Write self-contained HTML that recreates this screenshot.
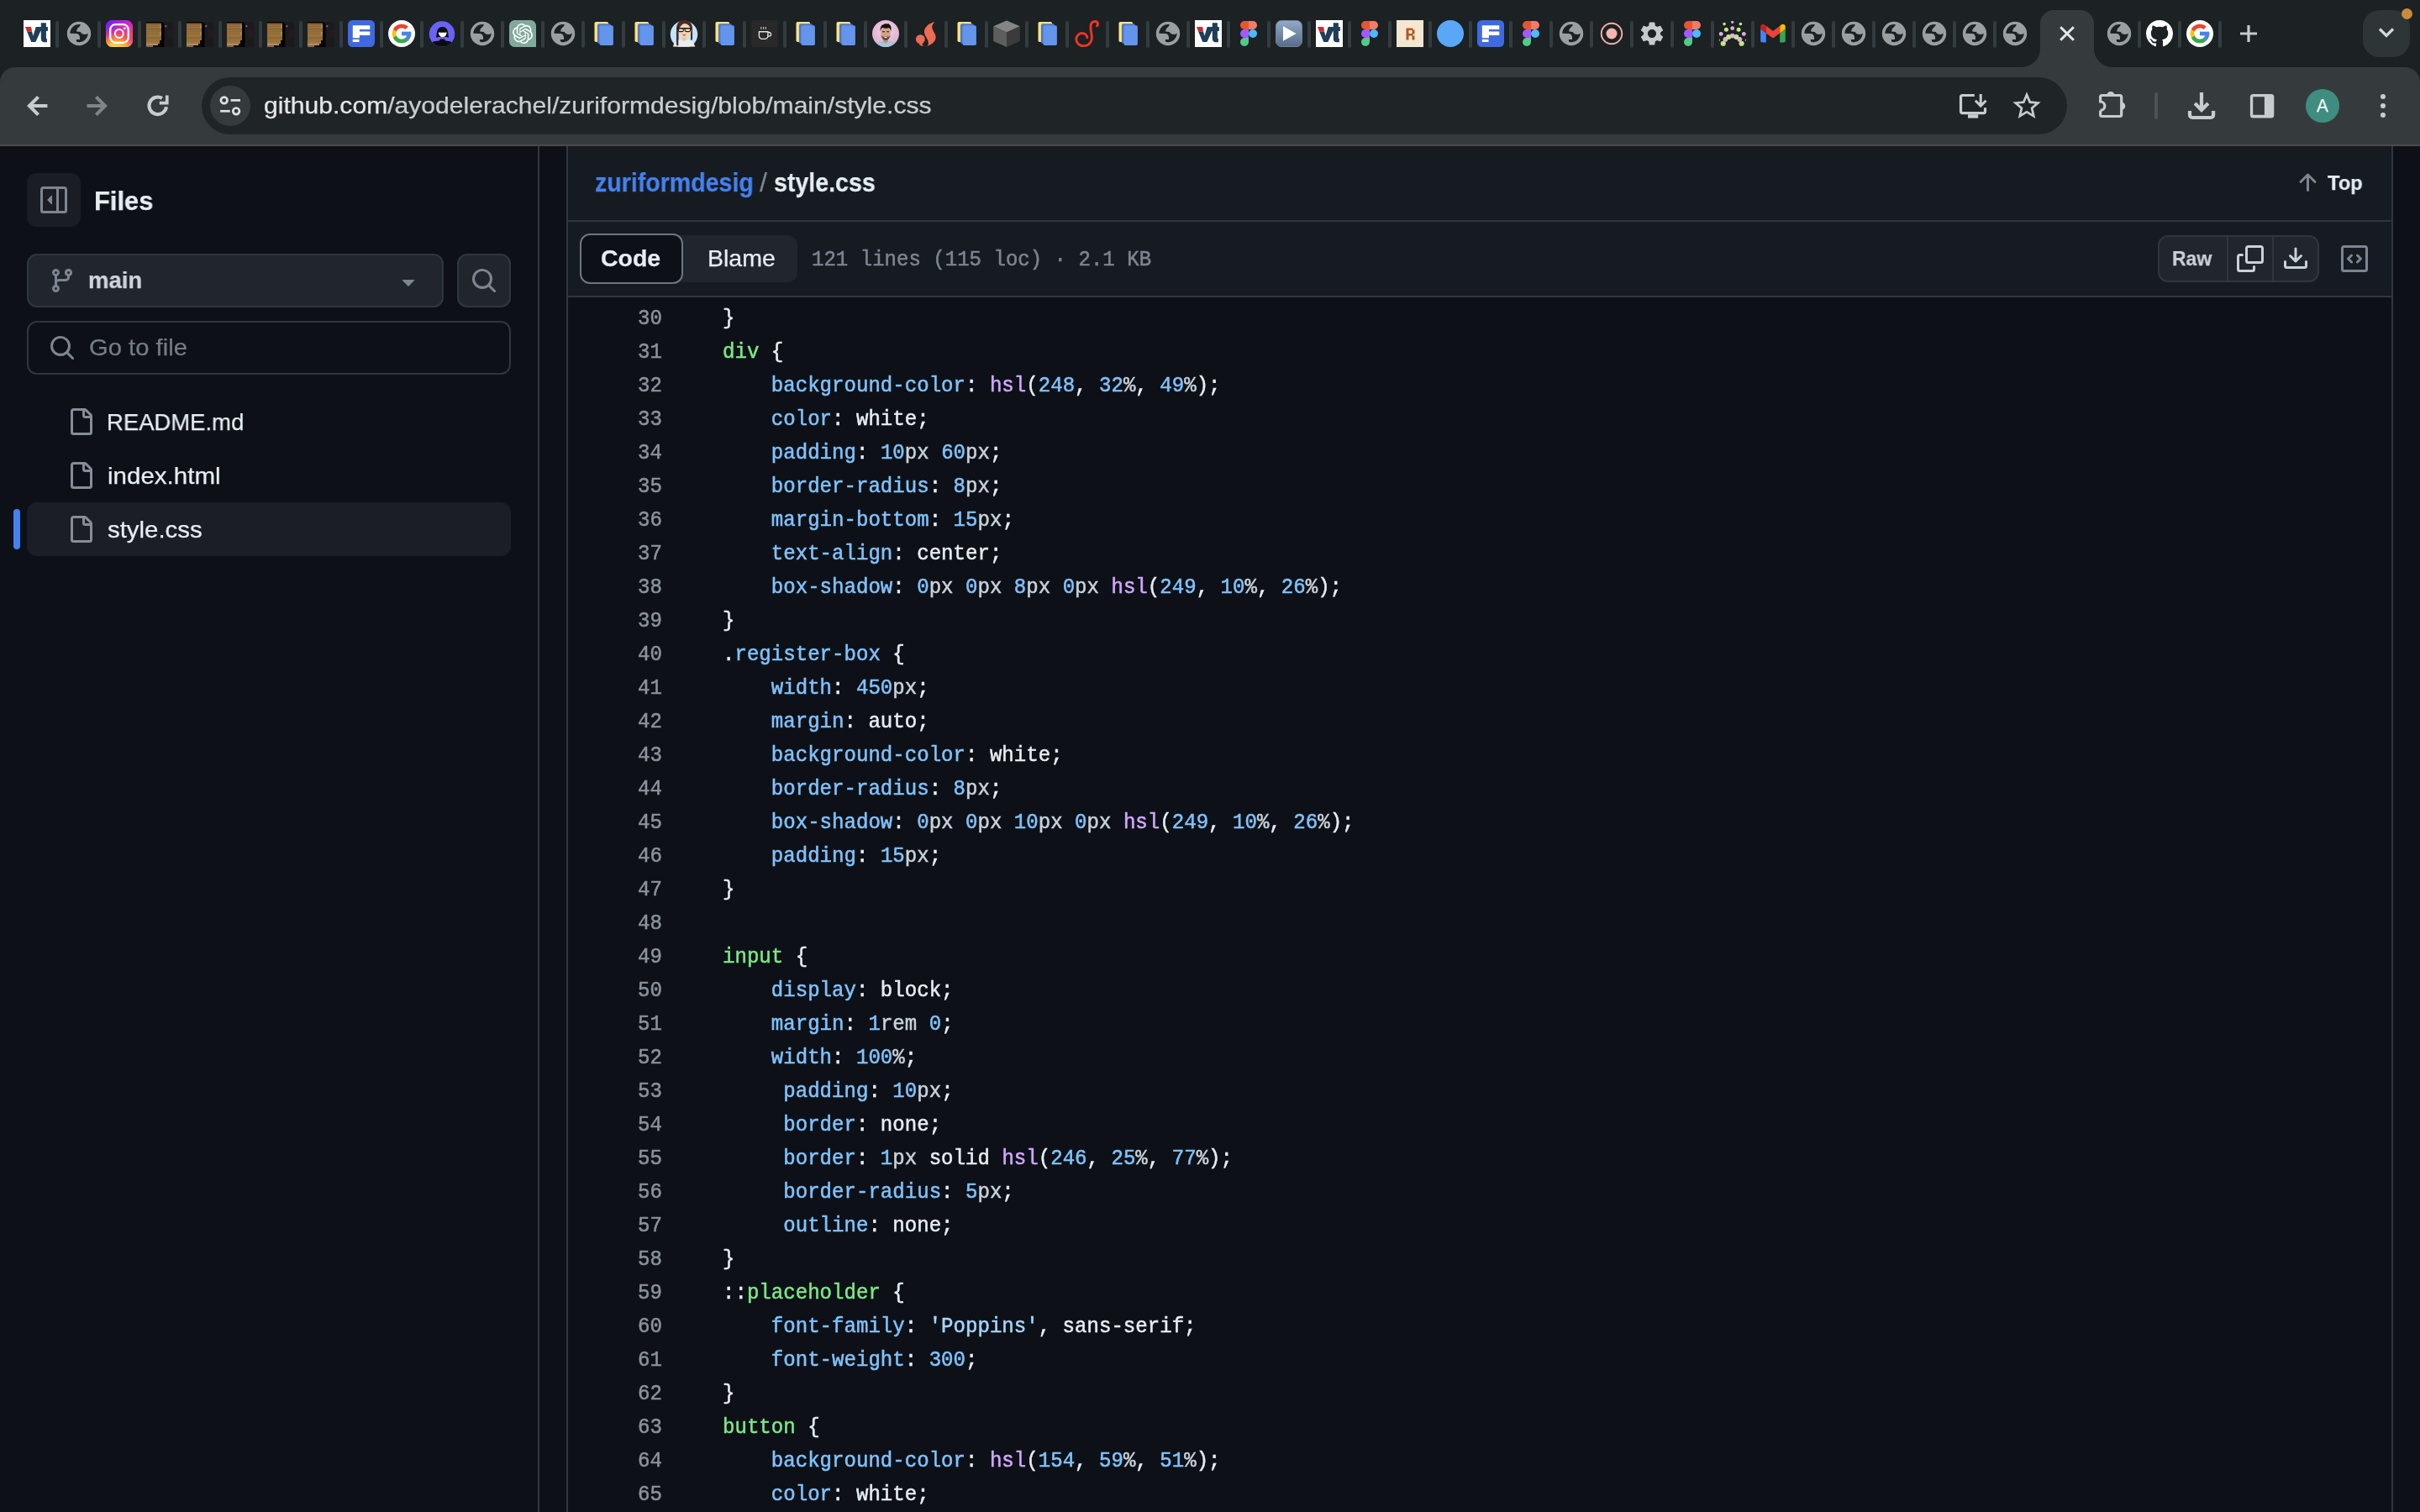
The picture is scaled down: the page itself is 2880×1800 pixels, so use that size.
<!DOCTYPE html>
<html lang="en"><head><meta charset="utf-8">
<title>zuriformdesig/style.css at main</title>
<style>
*{box-sizing:border-box;margin:0;padding:0}
html,body{width:2880px;height:1800px;overflow:hidden;background:#0d1117}
body{position:relative;font-family:"Liberation Sans",sans-serif;color:#e6edf3}
.abs{position:absolute}
svg{display:block;overflow:visible}
/* ---------- chrome ---------- */
#tabstrip{position:absolute;left:0;top:0;width:2880px;height:110px;background:#1c2123}
#toolbar{position:absolute;left:0;top:80px;width:2880px;height:92px;background:#353b3d;border-radius:18px 18px 0 0}
#tbline{position:absolute;left:0;top:172px;width:2880px;height:2px;background:#4a4b4b}
.fav{position:absolute;top:24px;width:32px;height:32px}
.sep{position:absolute;top:25px;width:4px;height:32px;border-radius:2px;background:#333c3f}
#omni{position:absolute;left:240px;top:12px;width:2220px;height:68px;border-radius:34px;background:#1f2527}
#siteinfo{position:absolute;left:10px;top:10px;width:48px;height:48px;border-radius:24px;background:#353b3d}
#url{position:absolute;left:75px;top:0;height:68px;line-height:67px;font-size:28px;color:#e3e6e8;white-space:nowrap;letter-spacing:0.1px}
.tbi{position:absolute}
/* ---------- page ---------- */
#page{position:absolute;left:0;top:174px;width:2880px;height:1626px;background:#0d1117;overflow:hidden}
#sideborder{position:absolute;left:640px;top:0;width:2px;height:1626px;background:#30363d}
#gutterL{position:absolute;left:642px;top:0;width:32px;height:1626px;background:#0d1117}
#gutterR{position:absolute;left:2848px;top:0;width:32px;height:1626px;background:#0d1117}
#main{position:absolute;left:674px;top:0;width:2174px;height:1626px;border-left:2px solid #30363d;border-right:2px solid #30363d;background:#0d1117}
#hdr1{position:absolute;left:0;top:0;width:2170px;height:90px;background:#161b22;border-bottom:2px solid #30363d}
#hdr2{position:absolute;left:0;top:90px;width:2170px;height:90px;background:#161b22;border-bottom:2px solid #30363d}
.t{position:absolute;white-space:nowrap;line-height:1;will-change:transform}
.b{font-weight:bold;-webkit-text-stroke:0}
.t{-webkit-text-stroke:0.25px}
.mono{font-family:"Liberation Mono",monospace;-webkit-text-stroke:0.5px}
.btn{position:absolute;border:2px solid #30363d;background:#21262d;border-radius:12px}
/* code */
#code{position:absolute;left:0;top:0;width:2170px}
.ln{position:absolute;left:0;width:115px;text-align:right;font-family:"Liberation Mono",monospace;font-size:24px;line-height:40px;height:40px;color:#8b929c;white-space:pre;will-change:transform;-webkit-text-stroke:0.5px}
.cl{position:absolute;left:186px;font-family:"Liberation Mono",monospace;font-size:24px;line-height:40px;height:40px;color:#e6edf3;white-space:pre;will-change:transform;-webkit-text-stroke:0.5px}
.u{color:#c9d1d9}.p{color:#80c2fd}.g{color:#7ee787}.f{color:#d2a8ff}.s{color:#a5d6ff}

</style></head>
<body>
<div id="tabstrip">
<svg width="0" height="0" style="position:absolute"><defs>
<symbol id="fBLUEC" viewBox="0 0 32 32" overflow="visible"><circle cx="16" cy="16" r="16" fill="#59a7f6"/></symbol>
<symbol id="fBROWN" viewBox="0 0 32 32" overflow="visible"><rect width="32" height="32" fill="#1f1b1f"/><rect width="32" height="2.100" fill="#1d2324"/><rect x="21.500" y="2.100" width="10.500" height="30" fill="#1d1a1e"/><rect x="26" y="12" width="6" height="8" fill="#231b22"/><rect x="24" y="22" width="8" height="10" fill="#1a1a1c"/><rect x="0" y="2.100" width="19.800" height="1.700" fill="#070304"/><rect x="18" y="3.700" width="3.500" height="28.300" fill="#050203"/><rect x="0" y="3.70" width="18" height="2.08" fill="#8f6f33"/><rect x="0" y="5.73" width="18" height="2.08" fill="#a0723f"/><rect x="16" y="5.73" width="2" height="2.08" fill="#a58a52"/><rect x="0" y="7.76" width="18" height="2.08" fill="#a27440"/><rect x="16" y="7.76" width="2" height="2.08" fill="#a58a52"/><rect x="0" y="9.79" width="18" height="2.08" fill="#8e6f2f"/><rect x="0" y="11.82" width="18" height="2.08" fill="#99704a"/><rect x="0" y="13.85" width="18" height="2.08" fill="#967236"/><rect x="16" y="13.85" width="2" height="2.08" fill="#a58a52"/><rect x="0" y="15.88" width="18" height="2.08" fill="#9c7038"/><rect x="16" y="15.88" width="2" height="2.08" fill="#a58a52"/><rect x="0" y="17.91" width="18" height="2.08" fill="#997540"/><rect x="0" y="19.94" width="18" height="2.08" fill="#8c6a30"/><rect x="0" y="21.97" width="18" height="2.08" fill="#93713c"/><rect x="0" y="24.00" width="16.1" height="2.08" fill="#a0703a"/><rect x="16.1" y="24.00" width="1.9" height="2.08" fill="#0a0604"/><rect x="0" y="26.03" width="16.1" height="2.08" fill="#a07a48"/><rect x="16.1" y="26.03" width="1.9" height="2.08" fill="#0a0604"/><rect x="0" y="28.06" width="14" height="2.08" fill="#b09070"/><rect x="14" y="28.06" width="4.0" height="2.08" fill="#0a0604"/><rect x="0" y="30.09" width="8.2" height="1.96" fill="#8a6a40"/><rect x="8.2" y="30.09" width="9.8" height="1.96" fill="#0a0604"/><rect x="22.300" y="6" width="2" height="2.200" fill="#69657f"/></symbol>
<symbol id="fCHATGPT" viewBox="0 0 32 32" overflow="visible"><path fill="#80a99c" d="M6.500 0H25.500A6.500 6.500 0 0 1 32 6.500V32H6.500A6.500 6.500 0 0 1 0 25.500V6.500A6.500 6.500 0 0 1 6.500 0Z"/><path transform="translate(4 4)" fill="#fff" d="M22.2819 9.8211a5.9847 5.9847 0 0 0-.5157-4.9108 6.0462 6.0462 0 0 0-6.5098-2.9A6.0651 6.0651 0 0 0 4.9807 4.1818a5.9847 5.9847 0 0 0-3.9977 2.9 6.0462 6.0462 0 0 0 .7427 7.0966 5.98 5.98 0 0 0 .511 4.9107 6.051 6.051 0 0 0 6.5146 2.9001A5.9847 5.9847 0 0 0 13.2599 24a6.0557 6.0557 0 0 0 5.7718-4.2058 5.9894 5.9894 0 0 0 3.9977-2.9001 6.0557 6.0557 0 0 0-.7475-7.0729zm-9.022 12.6081a4.4755 4.4755 0 0 1-2.8764-1.0408l.1419-.0804 4.7783-2.7582a.7948.7948 0 0 0 .3927-.6813v-6.7369l2.02 1.1686a.071.071 0 0 1 .038.052v5.5826a4.504 4.504 0 0 1-4.4945 4.4944zm-9.6607-4.1254a4.4708 4.4708 0 0 1-.5346-3.0137l.142.0852 4.783 2.7582a.7712.7712 0 0 0 .7806 0l5.8428-3.3685v2.3324a.0804.0804 0 0 1-.0332.0615L9.74 19.9502a4.4992 4.4992 0 0 1-6.1408-1.6464zM2.3408 7.8956a4.485 4.485 0 0 1 2.3655-1.9728V11.6a.7664.7664 0 0 0 .3879.6765l5.8144 3.3543-2.0201 1.1685a.0757.0757 0 0 1-.071 0l-4.8303-2.7865A4.504 4.504 0 0 1 2.3408 7.872zm16.5963 3.8558L13.1038 8.364 15.1192 7.2a.0757.0757 0 0 1 .071 0l4.8303 2.7913a4.4944 4.4944 0 0 1-.6765 8.1042v-5.6772a.79.79 0 0 0-.407-.667zm2.0107-3.0231l-.142-.0852-4.7735-2.7818a.7759.7759 0 0 0-.7854 0L9.409 9.2297V6.8974a.0662.0662 0 0 1 .0284-.0615l4.8303-2.7866a4.4992 4.4992 0 0 1 6.6802 4.66zM8.3065 12.863l-2.02-1.1638a.0804.0804 0 0 1-.038-.0567V6.0742a4.4992 4.4992 0 0 1 7.3757-3.4537l-.142.0805L8.704 5.459a.7948.7948 0 0 0-.3927.6813zm1.0976-2.3654l2.602-1.4998 2.6069 1.4998v2.9994l-2.5974 1.4997-2.6067-1.4997Z"/></symbol>
<symbol id="fCOFFEE" viewBox="0 0 32 32" overflow="visible"><rect width="32" height="32" rx="3.500" fill="#2a2929"/><g fill="none" stroke="#e4e4e4" stroke-width="1.350" stroke-linejoin="round"><path d="M9.400 13.700h10.500v5a3.700 3.700 0 0 1-3.700 3.700h-3.100a3.700 3.700 0 0 1-3.700-3.700z"/><path d="M19.900 14.500h1.400a2.300 2.300 0 0 1 0 4.600h-1.600"/></g><path stroke="#cfcfcf" stroke-width="1.100" d="M11.800 7.900v2.900M14.600 7.900v2.900M17.300 7.900v2.900"/></symbol>
<symbol id="fCUBE" viewBox="0 0 32 32" overflow="visible"><path fill="#858585" d="M16 0.500 31.800 7.300 16 14.500 0.200 7.300Z"/><path fill="#5e5e5e" d="M0.200 7.300 16 14.500V32L0.200 25Z"/><path fill="#3b3b3b" d="M31.800 7.300 16 14.500V32L31.800 25Z"/></symbol>
<symbol id="fDOCS" viewBox="0 0 32 32" overflow="visible"><rect x="5.500" y="1.900" width="16.600" height="24.100" rx="1.800" fill="#fbe47c"/><rect x="8.900" y="4.200" width="16" height="23.600" rx="1.800" fill="#5474c4"/><rect x="11.500" y="6.200" width="16.400" height="23.800" rx="1.800" fill="#6495ec"/></symbol>
<symbol id="fDOTS" viewBox="0 0 32 32" overflow="visible"><circle cx="4.77" cy="27.75" r="3.1" fill="#c3e681"/><circle cx="26.6" cy="27.75" r="3.1" fill="#c3e681"/><circle cx="7.4" cy="22.8" r="2.9" fill="#dcb3db"/><circle cx="24.3" cy="22.8" r="2.9" fill="#dcb3db"/><circle cx="11.2" cy="19.9" r="3.0" fill="#c3e681"/><circle cx="20.3" cy="19.9" r="3.0" fill="#c3e681"/><circle cx="15.7" cy="18.6" r="2.8" fill="#dcb3db"/><circle cx="2.15" cy="16.4" r="2.4" fill="#dcb3db"/><circle cx="8.4" cy="11.3" r="2.5" fill="#c3e681"/><circle cx="15.7" cy="9.6" r="2.4" fill="#dcb3db"/><circle cx="23.1" cy="11.3" r="2.5" fill="#c3e681"/><circle cx="29.35" cy="16.4" r="2.4" fill="#dcb3db"/><circle cx="6.07" cy="4.6" r="1.8" fill="#c3e681"/><circle cx="15.7" cy="2.3" r="1.6" fill="#dcb3db"/><circle cx="25.4" cy="4.6" r="1.8" fill="#c3e681"/><ellipse cx="0.400" cy="23.700" rx="0.600" ry="1.500" fill="#8fa862"/><ellipse cx="31.500" cy="23.700" rx="0.600" ry="1.500" fill="#8fa862"/></symbol>
<symbol id="fFBLUE" viewBox="0 0 32 32" overflow="visible"><rect width="32" height="32" rx="5.500" fill="#3f69e1"/><path fill="#fff" d="M5.800 6.300H26.300V10.900H13.900V13.600H26.300V18.100H13.900V21.200H5.800Z"/><rect x="5.800" y="22.900" width="7.700" height="3.100" fill="#fff"/></symbol>
<symbol id="fFIGMA" viewBox="0 0 32 32" overflow="visible"><path fill="#e4572e" d="M11 1h5v10h-5a5 5 0 0 1 0-10z"/><path fill="#f07b6a" d="M16 1h5a5 5 0 0 1 0 10h-5z"/><path fill="#a259ff" d="M11 11h5v10h-5a5 5 0 0 1 0-10z"/><circle cx="21" cy="16" r="5" fill="#4cb9f8"/><path fill="#54c988" d="M11 21h5v5a5 5 0 1 1-5-5z"/></symbol>
<symbol id="fFLAME" viewBox="0 0 32 32" overflow="visible"><path fill="#ed6d54" d="M26.800 2C22 2.800 17.500 5.500 15 9.500 13.200 12.800 13.800 16.500 16.200 20.200 17.600 22.500 19 25 18.900 27.500 18.850 28.900 18.200 30 17.350 30.660 20 30.300 24 27.800 26.300 24.800 28.200 21.800 28 18.500 26.200 15.400 24.600 12.700 23.100 10.500 23.200 8 23.300 5.800 24.800 3.600 26.800 2Z"/><circle cx="9.350" cy="22.660" r="5.400" fill="#ed6d54"/><path fill="#ed6d54" d="M13.700 25.900C12.600 27 11.600 27.800 11.400 28.400 11.800 29.500 12.600 30.300 13.300 30.950 11.500 31 9.500 30.600 7.500 28.500Z"/></symbol>
<symbol id="fGEAR" viewBox="0 0 32 32" overflow="visible"><g transform="translate(-0.800 -0.800) scale(1.400)"><path fill="#c6cacc" d="M19.140 12.940c.04-.3.060-.610.060-.940 0-.320-.020-.640-.070-.940l2.030-1.580a.490.490 0 0 0 .120-.610l-1.920-3.320a.488.488 0 0 0-.590-.220l-2.390.960c-.5-.380-1.030-.7-1.620-.940l-.360-2.540a.484.484 0 0 0-.480-.410h-3.840c-.240 0-.430.170-.470.410l-.360 2.540c-.590.240-1.130.570-1.620.940l-2.390-.960c-.220-.080-.470 0-.590.220L2.740 8.870c-.120.210-.080.470.120.610l2.030 1.580c-.050.3-.090.630-.090.940s.020.640.070.940l-2.030 1.580a.490.490 0 0 0-.120.610l1.920 3.320c.120.220.370.290.590.220l2.390-.960c.5.380 1.030.7 1.620.940l.360 2.540c.050.240.240.410.480.410h3.840c.240 0 .440-.170.470-.410l.360-2.540c.590-.240 1.130-.560 1.620-.940l2.390.960c.220.080.470 0 .590-.220l1.920-3.320c.120-.220.070-.470-.120-.610l-2.010-1.580zM12 15.600c-1.980 0-3.600-1.620-3.600-3.600s1.620-3.600 3.600-3.600 3.600 1.620 3.600 3.600-1.620 3.600-3.600 3.600z"/></g></symbol>
<symbol id="fGITHUB" viewBox="0 0 32 32" overflow="visible"><g transform="scale(2)"><path fill="#fff" d="M8 0c4.420 0 8 3.580 8 8a8.013 8.013 0 0 1-5.450 7.590c-.4.080-.550-.170-.550-.380 0-.270.010-1.130.010-2.200 0-.750-.250-1.230-.540-1.480 1.780-.2 3.650-.880 3.650-3.950 0-.880-.310-1.590-.820-2.150.080-.2.360-1.020-.080-2.120 0 0-.670-.220-2.200.820-.640-.180-1.320-.270-2-.270-.680 0-1.360.090-2 .270-1.530-1.030-2.200-.820-2.200-.820-.440 1.100-.160 1.920-.080 2.120-.510.560-.820 1.280-.820 2.150 0 3.060 1.860 3.750 3.640 3.950-.230.2-.440.550-.510 1.070-.460.210-1.610.550-2.330-.660-.150-.240-.6-.830-1.230-.820-.670.010-.270.380.010.530.340.190.730.9.820 1.130.160.450.680 1.310 2.690.940 0 .670.010 1.300.010 1.490 0 .210-.150.450-.550.380A7.995 7.995 0 0 1 0 8c0-4.420 3.580-8 8-8Z"/></g></symbol>
<symbol id="fGLOBE" viewBox="0 0 32 32" overflow="visible"><circle cx="16" cy="16" r="14.200" fill="#9a9fa3"/><path fill="#1c2123" d="M5.300 15.700C5.600 10 10 5.100 16 5.100L17.800 5.100C17.500 6.900 16.500 8.100 14.800 9.200 13.600 10.300 13.200 12 13.200 13.500L17.800 14C18.600 15.700 20.500 17 23.500 17 25 17 26 16.400 26.800 15.600 26.500 21 22.500 26.200 16.500 26.200 15 26.200 14 26 13 25.500L12.800 23.100 17 23C17.300 20 16.800 16.400 13 16.100Z"/></symbol>
<symbol id="fGMAIL" viewBox="0 0 32 32" overflow="visible"><path fill="#4285f4" d="M3.200 26.500h4.600V15.400L1.200 10.400v14.100c0 1.100.9 2 2 2z"/><path fill="#34a853" d="M24.200 26.500h4.600c1.100 0 2-.9 2-2V10.400l-6.600 5z"/><path fill="#fbbc04" d="M24.200 6.700v8.700l6.600-5V7.800c0-2.500-2.800-3.900-4.800-2.400z"/><path fill="#ea4335" d="M7.800 15.400V6.700l8.200 6.200 8.200-6.200v8.700L16 21.600z"/><path fill="#c5221f" d="M1.200 7.800v2.600l6.600 5V6.700L6 5.400C4 3.900 1.200 5.300 1.200 7.800z"/></symbol>
<symbol id="fGOOGLE" viewBox="0 0 32 32" overflow="visible"><circle cx="16" cy="16" r="16" fill="#fff"/><g transform="translate(2.400 2.400) scale(0.5667)"><path fill="#ffc107" d="M43.611 20.083H42V20H24v8h11.303c-1.649 4.657-6.080 8-11.303 8-6.627 0-12-5.373-12-12s5.373-12 12-12c3.059 0 5.842 1.154 7.961 3.039l5.657-5.657C34.046 6.053 29.268 4 24 4 12.955 4 4 12.955 4 24s8.955 20 20 20 20-8.955 20-20c0-1.341-.138-2.650-.389-3.917z"/><path fill="#ea4335" d="M6.306 14.691l6.571 4.819C14.655 15.108 18.961 12 24 12c3.059 0 5.842 1.154 7.961 3.039l5.657-5.657C34.046 6.053 29.268 4 24 4 16.318 4 9.656 8.337 6.306 14.691z"/><path fill="#34a853" d="M24 44c5.166 0 9.860-1.977 13.409-5.192l-6.190-5.238A11.910 11.910 0 0 1 24 36c-5.202 0-9.619-3.317-11.283-7.946l-6.522 5.025C9.505 39.556 16.227 44 24 44z"/><path fill="#4285f4" d="M43.611 20.083H42V20H24v8h11.303a12.040 12.040 0 0 1-4.087 5.571l.003-.002 6.190 5.238C36.971 39.205 44 34 44 24c0-1.341-.138-2.650-.389-3.917z"/></g></symbol>
<symbol id="fINSTA" viewBox="0 0 32 32" overflow="visible"><defs><linearGradient id="ig1" x1="0.35" y1="0" x2="0.5" y2="1"><stop offset="0" stop-color="#a524e6"/><stop offset="0.24" stop-color="#d926c4"/><stop offset="0.5" stop-color="#ee3a80"/><stop offset="0.74" stop-color="#f0603e"/><stop offset="1" stop-color="#f9b53c"/></linearGradient><radialGradient id="ig2" cx="0.02" cy="0.02" r="0.6"><stop offset="0" stop-color="#5f1fff"/><stop offset="0.45" stop-color="#7a22f4" stop-opacity="0.8"/><stop offset="1" stop-color="#a524e6" stop-opacity="0"/></radialGradient><radialGradient id="ig3" cx="0.36" cy="1.08" r="0.62"><stop offset="0" stop-color="#ffe045"/><stop offset="0.4" stop-color="#fcc53e" stop-opacity="0.95"/><stop offset="1" stop-color="#f58a35" stop-opacity="0"/></radialGradient><radialGradient id="ig4" cx="1.08" cy="0.72" r="0.45"><stop offset="0" stop-color="#f6339a"/><stop offset="1" stop-color="#ee3a80" stop-opacity="0"/></radialGradient></defs><rect width="32" height="32" rx="7.600" fill="url(#ig1)"/><rect width="32" height="32" rx="7.600" fill="url(#ig4)"/><rect width="32" height="32" rx="7.600" fill="url(#ig2)"/><rect width="32" height="32" rx="7.600" fill="url(#ig3)"/><rect x="5.200" y="5.200" width="21.600" height="21.600" rx="6.200" fill="none" stroke="#fff" stroke-width="2.300"/><circle cx="15.850" cy="16" r="4.950" fill="none" stroke="#fff" stroke-width="2.100"/><circle cx="22.260" cy="9.860" r="1.450" fill="#fff"/></symbol>
<symbol id="fMAN" viewBox="0 0 32 32" overflow="visible"><defs><clipPath id="mc"><circle cx="16" cy="16" r="16"/></clipPath><radialGradient id="mg" cx="0.5" cy="0.4" r="0.7"><stop offset="0" stop-color="#f3d3e6"/><stop offset="1" stop-color="#d9a9c9"/></radialGradient></defs><circle cx="16" cy="16" r="16" fill="url(#mg)"/><g clip-path="url(#mc)"><path fill="#a9c4dc" d="M3 34c.5-6 3.500-8.500 9.500-9.500l3.500 1.500 3.500-1.500c6 1 9 3.500 9.500 9.500z"/><path fill="#c98e6c" d="M13.300 21h5.400v5l-2.700 1.500-2.700-1.500z"/><ellipse cx="16" cy="15.500" rx="5.700" ry="7.200" fill="#d6a483"/><path fill="#4a352e" fill-opacity="0.78" d="M10.300 17.500c.6 4 2.700 6.500 5.700 6.500s5.100-2.500 5.700-6.500c-.8 1.500-1.600 2.200-2.600 2.300-1-.6-2-.8-3.100-.8s-2.100.2-3.100.8c-1-.1-1.800-.8-2.600-2.300z"/><path fill="#fff" d="M13.800 19.800h4.400c-.4.900-1.200 1.300-2.200 1.300s-1.800-.4-2.200-1.300z"/><path fill="#17110f" d="M9.800 13.500c-.6-4.500 1-8 3.500-8.200.8-1 2.500-1.400 4-.8 1.500-.6 3.200 0 3.700 1.300 1.600 1 2 4 1.200 7.700-.5-2-1.200-3.500-2.200-4.200-2.500.6-5.500.4-7.800-.3-1.200.8-2 2.500-2.400 4.500z"/><path fill="#17110f" d="M12 13.300h2.800v.9H12zM17.200 13.300H20v.9h-2.800z"/></g></symbol>
<symbol id="fPLAY" viewBox="0 0 32 32" overflow="visible"><defs><linearGradient id="pg" x1="0" y1="0" x2="0" y2="1"><stop offset="0" stop-color="#93a9c6"/><stop offset="1" stop-color="#566c8a"/></linearGradient></defs><rect x="0.500" y="0.500" width="31" height="31" rx="6.500" fill="url(#pg)" stroke="#6f84a1" stroke-width="1"/><path fill="#fff" d="M9 7.300 24.600 16 9 24.700Z"/></symbol>
<symbol id="fPURPLE" viewBox="0 0 32 32" overflow="visible"><defs><clipPath id="pc"><circle cx="16" cy="16.400" r="15.200"/></clipPath></defs><circle cx="16" cy="16.400" r="15.200" fill="#6a61f8"/><g clip-path="url(#pc)"><path fill="#0d0d0e" d="M16.600 8C12 8 10.200 11.500 9.800 15 9.500 17.500 9.300 18.500 9 20.200 9.600 20.900 10.600 20.700 11.200 20H22C22.600 20.700 23.500 20.900 24 20.200 23.700 18.500 23.500 17.500 23.200 15 22.800 11.500 21.200 8 16.600 8Z"/><path fill="#fff" d="M12 14.400Q16.800 15 21.600 14.400C21.600 17.500 19.500 20 16.800 20 14 20 12 17.500 12 14.400Z"/><path fill="#0d0d0e" d="M13.700 22.400H19.100L20 24.500 26 25.300 31 29V34H1V29L6.300 25.300 12.800 24.500Z"/></g></symbol>
<symbol id="fRBEIGE" viewBox="0 0 32 32" overflow="visible"><rect width="32" height="32" fill="#f3e7d2"/><path fill="#f6ecda" d="M0 15.500h32v1H0zM15.500 0h1v32h-1z"/><path fill="#b4561d" fill-rule="evenodd" d="M11.500 9.500h8v2h2v5h-2v2h2v2.500h-3V18.500h-4V23.500h-3zM14.500 12v4h4v-4z"/><rect x="18.500" y="21" width="3" height="2.500" fill="#b4561d"/></symbol>
<symbol id="fSWIRL" viewBox="0 0 32 32" overflow="visible"><path fill="none" stroke="#f03424" stroke-width="2.900" stroke-linecap="round" d="M27.400 6.800C29.600 5.200 28.600 1.600 25.200 1.560 22.500 1.500 20.600 3.200 20.100 6.500 19.600 10 20.400 12.500 20.900 16 21.600 20 21.800 22.800 20.260 25.400 18.500 28.500 15 30.660 11.530 30.660 6.500 30.660 2.800 27 2.800 23.100 2.800 18.700 6 15.500 9.600 15.500 13.300 15.500 15.600 18 15.900 20.770"/></symbol>
<symbol id="fTARGET" viewBox="0 0 32 32" overflow="visible"><circle cx="16" cy="16" r="12.300" fill="none" stroke="#f4b1a8" stroke-width="1.900"/><circle cx="16" cy="16" r="6.500" fill="#f6b6ad"/></symbol>
<symbol id="fVT" viewBox="0 0 32 32" overflow="visible"><rect width="32" height="32" fill="#fff"/><path fill="#1f3d57" d="M4.330 14.100 9.270 26H14.370L20.300 12.900H20.770V21.600Q20.770 26.300 24.800 26.300H27.900V21.900H27.500Q26.900 21.900 26.900 21V12.900H28.900V7.970H26.900V3.300H20.770V7.970H14.700L11.460 18.700 10.150 13.800Z"/><path fill="#cf2a32" d="M2 7.970H9.130L10.150 13.800 4.330 14.100Z"/></symbol>
<symbol id="fWOMAN" viewBox="0 0 32 32" overflow="visible"><defs><clipPath id="wc"><rect x="-1" y="-1" width="34" height="32.800"/></clipPath></defs><g clip-path="url(#wc)"><circle cx="16" cy="17" r="16.200" fill="#c3e4fb"/><path fill="#4a2c26" d="M16.300 0C10.500 0 7 4 7 10V28C7 29.600 7.500 30.300 8.300 30.300H9.400V14H24V23.700H25.300C26 23.700 26.100 22 26.100 20V10C26.100 4 22.300 0 16.300 0Z"/><path fill="#ecc6a0" d="M13.600 19.500H19V25H13.600Z"/><ellipse cx="16.900" cy="12.500" rx="7.600" ry="8.600" fill="#f3d6b2"/><path fill="#4a2c26" d="M8.600 13C8.300 6.500 11 2.300 17.300 2.600 14 4.500 11 7.500 9.900 12Z"/><path fill="#4a2c26" d="M17.300 2.600C21.800 2.700 24.600 6 25 12 23.500 8 21 5 17.300 2.600Z"/><g fill="none" stroke="#1d1d20" stroke-width="1.100"><rect x="9.100" y="9.500" width="6.300" height="4.100" rx="1.500"/><rect x="17.200" y="9.500" width="6.400" height="4.100" rx="1.500"/></g><path stroke="#1d1d20" stroke-width="1.500" d="M8.300 9.700H24.400"/><path fill="#cf3a40" d="M13.800 16.600H18.700C18.400 18 17.400 18.700 16.250 18.700 15.100 18.700 14.100 18 13.800 16.600Z"/><path fill="#fff" d="M14.100 16.400H18.400L18.200 17.300H14.300Z"/><path fill="#ececec" d="M2.900 31.700C4 27 7 24 12.500 23L16.300 25.200 19.700 23C25 24 28 27 29.300 31.700Z"/><path fill="#4a2c26" d="M6.900 14H9.300V30.300H8.300C7.400 30.300 6.900 29.500 6.900 28Z"/></g></symbol>
</defs></svg>
<svg class="fav" style="left:28px" viewBox="0 0 32 32"><use href="#fVT"/></svg>
<div class="sep" style="left:66px"></div>
<svg class="fav" style="left:78px" viewBox="0 0 32 32"><use href="#fGLOBE"/></svg>
<div class="sep" style="left:116px"></div>
<svg class="fav" style="left:126px" viewBox="0 0 32 32"><use href="#fINSTA"/></svg>
<div class="sep" style="left:164px"></div>
<svg class="fav" style="left:174px" viewBox="0 0 32 32"><use href="#fBROWN"/></svg>
<div class="sep" style="left:212px"></div>
<svg class="fav" style="left:222px" viewBox="0 0 32 32"><use href="#fBROWN"/></svg>
<div class="sep" style="left:260px"></div>
<svg class="fav" style="left:270px" viewBox="0 0 32 32"><use href="#fBROWN"/></svg>
<div class="sep" style="left:308px"></div>
<svg class="fav" style="left:318px" viewBox="0 0 32 32"><use href="#fBROWN"/></svg>
<div class="sep" style="left:356px"></div>
<svg class="fav" style="left:366px" viewBox="0 0 32 32"><use href="#fBROWN"/></svg>
<div class="sep" style="left:404px"></div>
<svg class="fav" style="left:414px" viewBox="0 0 32 32"><use href="#fFBLUE"/></svg>
<div class="sep" style="left:452px"></div>
<svg class="fav" style="left:462px" viewBox="0 0 32 32"><use href="#fGOOGLE"/></svg>
<div class="sep" style="left:500px"></div>
<svg class="fav" style="left:510px" viewBox="0 0 32 32"><use href="#fPURPLE"/></svg>
<div class="sep" style="left:548px"></div>
<svg class="fav" style="left:558px" viewBox="0 0 32 32"><use href="#fGLOBE"/></svg>
<div class="sep" style="left:596px"></div>
<svg class="fav" style="left:606px" viewBox="0 0 32 32"><use href="#fCHATGPT"/></svg>
<div class="sep" style="left:644px"></div>
<svg class="fav" style="left:654px" viewBox="0 0 32 32"><use href="#fGLOBE"/></svg>
<div class="sep" style="left:692px"></div>
<svg class="fav" style="left:702px" viewBox="0 0 32 32"><use href="#fDOCS"/></svg>
<div class="sep" style="left:740px"></div>
<svg class="fav" style="left:750px" viewBox="0 0 32 32"><use href="#fDOCS"/></svg>
<div class="sep" style="left:788px"></div>
<svg class="fav" style="left:798px" viewBox="0 0 32 32"><use href="#fWOMAN"/></svg>
<div class="sep" style="left:836px"></div>
<svg class="fav" style="left:846px" viewBox="0 0 32 32"><use href="#fDOCS"/></svg>
<div class="sep" style="left:884px"></div>
<svg class="fav" style="left:894px" viewBox="0 0 32 32"><use href="#fCOFFEE"/></svg>
<div class="sep" style="left:932px"></div>
<svg class="fav" style="left:942px" viewBox="0 0 32 32"><use href="#fDOCS"/></svg>
<div class="sep" style="left:980px"></div>
<svg class="fav" style="left:990px" viewBox="0 0 32 32"><use href="#fDOCS"/></svg>
<div class="sep" style="left:1028px"></div>
<svg class="fav" style="left:1038px" viewBox="0 0 32 32"><use href="#fMAN"/></svg>
<div class="sep" style="left:1076px"></div>
<svg class="fav" style="left:1086px" viewBox="0 0 32 32"><use href="#fFLAME"/></svg>
<div class="sep" style="left:1124px"></div>
<svg class="fav" style="left:1134px" viewBox="0 0 32 32"><use href="#fDOCS"/></svg>
<div class="sep" style="left:1172px"></div>
<svg class="fav" style="left:1182px" viewBox="0 0 32 32"><use href="#fCUBE"/></svg>
<div class="sep" style="left:1220px"></div>
<svg class="fav" style="left:1230px" viewBox="0 0 32 32"><use href="#fDOCS"/></svg>
<div class="sep" style="left:1268px"></div>
<svg class="fav" style="left:1278px" viewBox="0 0 32 32"><use href="#fSWIRL"/></svg>
<div class="sep" style="left:1316px"></div>
<svg class="fav" style="left:1326px" viewBox="0 0 32 32"><use href="#fDOCS"/></svg>
<div class="sep" style="left:1364px"></div>
<svg class="fav" style="left:1374px" viewBox="0 0 32 32"><use href="#fGLOBE"/></svg>
<div class="sep" style="left:1412px"></div>
<svg class="fav" style="left:1422px" viewBox="0 0 32 32"><use href="#fVT"/></svg>
<div class="sep" style="left:1460px"></div>
<svg class="fav" style="left:1470px" viewBox="0 0 32 32"><use href="#fFIGMA"/></svg>
<div class="sep" style="left:1508px"></div>
<svg class="fav" style="left:1518px" viewBox="0 0 32 32"><use href="#fPLAY"/></svg>
<div class="sep" style="left:1556px"></div>
<svg class="fav" style="left:1566px" viewBox="0 0 32 32"><use href="#fVT"/></svg>
<div class="sep" style="left:1604px"></div>
<svg class="fav" style="left:1614px" viewBox="0 0 32 32"><use href="#fFIGMA"/></svg>
<div class="sep" style="left:1652px"></div>
<svg class="fav" style="left:1662px" viewBox="0 0 32 32"><use href="#fRBEIGE"/></svg>
<div class="sep" style="left:1700px"></div>
<svg class="fav" style="left:1710px" viewBox="0 0 32 32"><use href="#fBLUEC"/></svg>
<div class="sep" style="left:1748px"></div>
<svg class="fav" style="left:1758px" viewBox="0 0 32 32"><use href="#fFBLUE"/></svg>
<div class="sep" style="left:1796px"></div>
<svg class="fav" style="left:1806px" viewBox="0 0 32 32"><use href="#fFIGMA"/></svg>
<div class="sep" style="left:1844px"></div>
<svg class="fav" style="left:1854px" viewBox="0 0 32 32"><use href="#fGLOBE"/></svg>
<div class="sep" style="left:1892px"></div>
<svg class="fav" style="left:1902px" viewBox="0 0 32 32"><use href="#fTARGET"/></svg>
<div class="sep" style="left:1940px"></div>
<svg class="fav" style="left:1950px" viewBox="0 0 32 32"><use href="#fGEAR"/></svg>
<div class="sep" style="left:1988px"></div>
<svg class="fav" style="left:1998px" viewBox="0 0 32 32"><use href="#fFIGMA"/></svg>
<div class="sep" style="left:2036px"></div>
<svg class="fav" style="left:2046px" viewBox="0 0 32 32"><use href="#fDOTS"/></svg>
<div class="sep" style="left:2084px"></div>
<svg class="fav" style="left:2094px" viewBox="0 0 32 32"><use href="#fGMAIL"/></svg>
<div class="sep" style="left:2132px"></div>
<svg class="fav" style="left:2142px" viewBox="0 0 32 32"><use href="#fGLOBE"/></svg>
<div class="sep" style="left:2180px"></div>
<svg class="fav" style="left:2190px" viewBox="0 0 32 32"><use href="#fGLOBE"/></svg>
<div class="sep" style="left:2228px"></div>
<svg class="fav" style="left:2238px" viewBox="0 0 32 32"><use href="#fGLOBE"/></svg>
<div class="sep" style="left:2276px"></div>
<svg class="fav" style="left:2286px" viewBox="0 0 32 32"><use href="#fGLOBE"/></svg>
<div class="sep" style="left:2324px"></div>
<svg class="fav" style="left:2334px" viewBox="0 0 32 32"><use href="#fGLOBE"/></svg>
<div class="sep" style="left:2372px"></div>
<svg class="fav" style="left:2382px" viewBox="0 0 32 32"><use href="#fGLOBE"/></svg>
<svg class="fav" style="left:2506px" viewBox="0 0 32 32"><use href="#fGLOBE"/></svg>
<div class="sep" style="left:2544px"></div>
<svg class="fav" style="left:2554px" viewBox="0 0 32 32"><use href="#fGITHUB"/></svg>
<div class="sep" style="left:2592px"></div>
<svg class="fav" style="left:2602px" viewBox="0 0 32 32"><use href="#fGOOGLE"/></svg>
<div class="sep" style="left:2640px"></div>
<svg class="abs" style="left:2400px;top:0" width="120" height="82" viewBox="0 0 120 82"><path fill="#353b3d" d="M6 82V80A22 22 0 0 0 28 58V28A16 16 0 0 1 44 12H76A16 16 0 0 1 92 28V58A22 22 0 0 0 114 80V82Z"/></svg>
<svg class="abs" style="left:2449px;top:29px" width="22" height="22" viewBox="0 0 22 22"><path d="M3.200 3.200 18.800 18.800M18.800 3.200 3.200 18.800" stroke="#e4e7e8" stroke-width="3" fill="none"/></svg>
<svg class="abs" style="left:2665px;top:29px" width="22" height="22" viewBox="0 0 22 22"><path d="M11 1V21M1 11H21" stroke="#c5cacc" stroke-width="3.200" fill="none"/></svg>
<div class="abs" style="left:2812px;top:12px;width:56px;height:56px;border-radius:20px;background:#2e3537"></div>
<svg class="abs" style="left:2829px;top:31px" width="22" height="16" viewBox="0 0 22 16"><path d="M3 3.500 11 11.500 19 3.500" stroke="#d5d9db" stroke-width="3.200" fill="none"/></svg>
<div class="abs" style="left:2857.500px;top:9.500px;width:13px;height:13px;border-radius:7px;background:#c98b3c"></div>
</div>
<div id="toolbar">
<div id="omni"><div id="siteinfo"></div></div>
</div><div id="tbline"></div>
<div id="t_url" class="t" style="left:313.93px;top:112.20px;font-size:28px;color:#c9cdcf;transform-origin:0 23.70px;transform:scale(1.0748,1);"><span style="color:#e4e6e7">github.com</span>/ayodelerachel/zuriformdesig/blob/main/style.css</div>
<svg class="abs" style="left:28px;top:110px" width="32" height="32" viewBox="0 0 32 32" ><path fill="none" stroke="#c7cdcf" stroke-width="4.100" d="M17.500 5.400 6.900 16 17.500 26.600M7.500 16H28.400"/></svg>
<svg class="abs" style="left:100px;top:110px" width="32" height="32" viewBox="0 0 32 32" ><path fill="none" stroke="#808586" stroke-width="4.100" d="M14.400 5.400 25 16 14.400 26.600M3.500 16H24.400"/></svg>
<svg class="abs" style="left:172px;top:110px" width="32" height="32" viewBox="0 0 32 32" ><path fill="none" stroke="#c7cdcf" stroke-width="4.100" d="M26 17.200A10.300 10.300 0 1 1 20.950 6.880"/><path fill="none" stroke="#c7cdcf" stroke-width="3.700" d="M26.750 3.600V12.600H17.800"/></svg>
<svg class="abs" style="left:260px;top:112px" width="28" height="28" viewBox="0 0 28 28" ><g fill="none" stroke="#dde1e3" stroke-width="2.700"><circle cx="6.700" cy="7.400" r="3.800"/><path d="M14.500 7.400H26"/><circle cx="21.100" cy="20.300" r="3.800"/><path d="M2.100 20.300H13.700"/></g></svg>
<svg class="abs" style="left:2330px;top:108px" width="36" height="34" viewBox="0 0 36 34" ><g fill="none" stroke="#c7cdcf" stroke-width="3.200"><path d="M19.800 5.500H5.500a2 2 0 0 0-2 2V24.600a2 2 0 0 0 2 2H30.500a2 2 0 0 0 2-2V20.200"/><path d="M27.200 3.900V18M20.900 11.800 27.200 18.100 33.500 11.800" stroke-width="3"/></g><path fill="#c7cdcf" d="M12 28.200h12.200v4.400H12z"/></svg>
<svg class="abs" style="left:2391.7px;top:105.6px" width="40" height="40" viewBox="0 0 24 24" ><path fill="#c7cdcf" d="M22 9.240l-7.190-.620L12 2 9.190 8.630 2 9.240l5.460 4.730L5.820 21 12 17.270 18.180 21l-1.630-7.030L22 9.240zM12 15.400l-3.760 2.270 1-4.280-3.320-2.880 4.380-.380L12 6.100l1.710 4.040 4.380.380-3.320 2.880 1 4.280L12 15.400z"/></svg>
<svg class="abs" style="left:2494px;top:104px" width="40" height="40" viewBox="0 0 40 40" ><path fill="none" stroke="#c7cdcf" stroke-width="3.200" d="M5.600 27.400V32.500a2 2 0 0 0 2 2H28.700a2 2 0 0 0 2-2V11.500a2 2 0 0 0-2-2H7.600a2 2 0 0 0-2 2V17A5.200 5.200 0 0 1 5.600 27.400"/><path fill="#c7cdcf" d="M13.300 9.500A4.600 4.600 0 0 1 22.500 9.500ZM30.700 17.600A4.600 4.600 0 0 1 30.700 26.800Z"/></svg>
<div class="abs" style="left:2564px;top:110px;width:4px;height:32px;border-radius:2px;background:#4c5356"></div>
<svg class="abs" style="left:2600px;top:106px" width="40" height="40" viewBox="0 0 40 40" ><g fill="none" stroke="#c7cdcf" stroke-width="4.200"><path d="M20 3.900V24M12.100 17.100 20 25 27.900 17.100"/><path d="M6 25.900V31a3 3 0 0 0 3 3H31.100a3 3 0 0 0 3-3V25.900"/></g></svg>
<svg class="abs" style="left:2676px;top:110px" width="32" height="32" viewBox="0 0 32 32" ><path fill="#c7cdcf" fill-rule="evenodd" d="M5.400 1.900H26.800a3.500 3.500 0 0 1 3.500 3.500V27a3.500 3.500 0 0 1-3.500 3.500H5.400A3.500 3.500 0 0 1 1.900 27V5.400A3.500 3.500 0 0 1 5.400 1.900ZM5.200 5.200V26.800H18.900V5.200Z"/></svg>
<div class="abs" style="left:2744px;top:106px;width:40px;height:40px;border-radius:20px;background:#3e8d80"></div>
<div id="t_avA" class="t" style="left:2757.00px;top:115.38px;font-size:22px;color:#ffffff;transform-origin:0 18.62px;transform:scale(0.9413,1);">A</div>
<div class="abs" style="left:2832.8px;top:111.8px;width:6.400px;height:6.400px;border-radius:4px;background:#c8cdcf"></div>
<div class="abs" style="left:2832.8px;top:122.9px;width:6.400px;height:6.400px;border-radius:4px;background:#c8cdcf"></div>
<div class="abs" style="left:2832.8px;top:133.9px;width:6.400px;height:6.400px;border-radius:4px;background:#c8cdcf"></div>
<div id="page">
<div id="sideborder"></div><div id="gutterL"></div><div id="gutterR"></div>
<div id="main"><div id="hdr1"></div><div id="hdr2"></div></div>
</div>
<div class="abs" style="left:32px;top:206px;width:64px;height:64px;border-radius:12px;background:#1a1e24"></div>
<svg class="abs" style="left:48px;top:222px" width="32" height="32" viewBox="0 0 16 16" fill="#7d8590"><path d="m4.177 7.823 2.396-2.396A.25.25 0 0 1 7 5.604v4.792a.25.25 0 0 1-.427.177L4.177 8.177a.25.25 0 0 1 0-.354Z"/><path d="M0 1.75C0 .784.784 0 1.75 0h12.5C15.216 0 16 .784 16 1.75v12.5A1.75 1.75 0 0 1 14.25 16H1.75A1.75 1.75 0 0 1 0 14.25Zm1.75-.25a.25.25 0 0 0-.25.25v12.5c0 .138.112.25.25.25H9.5v-13Zm12.5 13a.25.25 0 0 0 .25-.25V1.75a.25.25 0 0 0-.25-.25H11v13Z"/></svg>
<div id="t_files" class="t b" style="left:111.68px;top:223.01px;font-size:32px;color:#e6edf3;transform-origin:0 27.09px;transform:scale(0.9643,1);">Files</div>
<div class="btn" style="left:32px;top:302px;width:496px;height:64px"></div>
<svg class="abs" style="left:58px;top:318px" width="32" height="32" viewBox="0 0 16 16" fill="#7d8590"><path d="M9.5 3.25a2.25 2.25 0 1 1 3 2.122V6A2.5 2.5 0 0 1 10 8.5H6a1 1 0 0 0-1 1v1.128a2.251 2.251 0 1 1-1.5 0V5.372a2.25 2.25 0 1 1 1.5 0v1.836A2.493 2.493 0 0 1 6 7h4a1 1 0 0 0 1-1v-.628A2.25 2.25 0 0 1 9.5 3.25Zm-6 0a.75.75 0 1 0 1.5 0 .75.75 0 0 0-1.5 0Zm8.25-.75a.75.75 0 1 0 0 1.5.75.75 0 0 0 0-1.5ZM4.25 12a.75.75 0 1 0 0 1.5.75.75 0 0 0 0-1.5Z"/></svg>
<div id="t_main" class="t b" style="left:105.31px;top:320.10px;font-size:28px;color:#cfd6dd;transform-origin:0 23.70px;transform:scale(0.9818,1);">main</div>
<svg class="abs" style="left:470px;top:319px" width="32" height="32" viewBox="0 0 16 16" fill="#7d8590"><path d="m4.427 7.427 3.396 3.396a.25.25 0 0 0 .354 0l3.396-3.396A.25.25 0 0 0 11.396 7H4.604a.25.25 0 0 0-.177.427Z"/></svg>
<div class="btn" style="left:544px;top:302px;width:64px;height:64px"></div>
<svg class="abs" style="left:560px;top:318px" width="32" height="32" viewBox="0 0 16 16" fill="#7d8590"><path d="M10.68 11.74a6 6 0 0 1-7.922-8.982 6 6 0 0 1 8.982 7.922l3.04 3.04a.749.749 0 0 1-.326 1.275.749.749 0 0 1-.734-.215ZM11.5 7a4.499 4.499 0 1 0-8.997 0A4.499 4.499 0 0 0 11.5 7Z"/></svg>
<div class="btn" style="left:32px;top:382px;width:576px;height:64px;background:#0d1117"></div>
<svg class="abs" style="left:58px;top:398px" width="32" height="32" viewBox="0 0 16 16" fill="#7d8590"><path d="M10.68 11.74a6 6 0 0 1-7.922-8.982 6 6 0 0 1 8.982 7.922l3.04 3.04a.749.749 0 0 1-.326 1.275.749.749 0 0 1-.734-.215ZM11.5 7a4.499 4.499 0 1 0-8.997 0A4.499 4.499 0 0 0 11.5 7Z"/></svg>
<div id="t_goto" class="t" style="left:105.79px;top:400.00px;font-size:28px;color:#757c87;transform-origin:0 23.70px;transform:scale(1.0440,1);">Go to file</div>
<div class="abs" style="left:32px;top:598px;width:576px;height:64px;border-radius:12px;background:#1b1f25"></div>
<div class="abs" style="left:16px;top:606px;width:8px;height:48px;border-radius:4px;background:#4781ef"></div>
<svg class="abs" style="left:80px;top:486px" width="32" height="32" viewBox="0 0 16 16" fill="#868d98"><path d="M2 1.75C2 .784 2.784 0 3.75 0h6.586c.464 0 .909.184 1.237.513l2.914 2.914c.329.328.513.773.513 1.237v9.586A1.75 1.75 0 0 1 13.25 16h-9.5A1.75 1.75 0 0 1 2 14.25Zm1.75-.25a.25.25 0 0 0-.25.25v12.5c0 .138.112.25.25.25h9.5a.25.25 0 0 0 .25-.25V6h-2.75A1.75 1.75 0 0 1 9 4.25V1.5Zm6.75.062V4.25c0 .138.112.25.25.25h2.688l-.011-.013-2.914-2.914-.013-.011Z"/></svg>
<div id="t_f0" class="t" style="left:127.05px;top:488.50px;font-size:28px;color:#e6edf3;transform-origin:0 23.70px;transform:scale(0.9810,1);">README.md</div>
<svg class="abs" style="left:80px;top:550px" width="32" height="32" viewBox="0 0 16 16" fill="#868d98"><path d="M2 1.75C2 .784 2.784 0 3.75 0h6.586c.464 0 .909.184 1.237.513l2.914 2.914c.329.328.513.773.513 1.237v9.586A1.75 1.75 0 0 1 13.25 16h-9.5A1.75 1.75 0 0 1 2 14.25Zm1.75-.25a.25.25 0 0 0-.25.25v12.5c0 .138.112.25.25.25h9.5a.25.25 0 0 0 .25-.25V6h-2.75A1.75 1.75 0 0 1 9 4.25V1.5Zm6.75.062V4.25c0 .138.112.25.25.25h2.688l-.011-.013-2.914-2.914-.013-.011Z"/></svg>
<div id="t_f1" class="t" style="left:127.66px;top:552.50px;font-size:28px;color:#e6edf3;transform-origin:0 23.70px;transform:scale(1.0543,1);">index.html</div>
<svg class="abs" style="left:80px;top:614px" width="32" height="32" viewBox="0 0 16 16" fill="#868d98"><path d="M2 1.75C2 .784 2.784 0 3.75 0h6.586c.464 0 .909.184 1.237.513l2.914 2.914c.329.328.513.773.513 1.237v9.586A1.75 1.75 0 0 1 13.25 16h-9.5A1.75 1.75 0 0 1 2 14.25Zm1.75-.25a.25.25 0 0 0-.25.25v12.5c0 .138.112.25.25.25h9.5a.25.25 0 0 0 .25-.25V6h-2.75A1.75 1.75 0 0 1 9 4.25V1.5Zm6.75.062V4.25c0 .138.112.25.25.25h2.688l-.011-.013-2.914-2.914-.013-.011Z"/></svg>
<div id="t_f2" class="t" style="left:128.09px;top:616.50px;font-size:28px;color:#e6edf3;transform-origin:0 23.70px;transform:scale(1.0498,1);">style.css</div>
<div id="t_repo" class="t b" style="left:708.11px;top:200.81px;font-size:32px;color:#4581ee;transform-origin:0 27.09px;transform:scale(0.8925,1);">zuriformdesig</div>
<div id="t_slash" class="t" style="left:903.80px;top:200.81px;font-size:32px;color:#7d8590;transform-origin:0 27.09px;transform:scale(1.0111,1);">/</div>
<div id="t_fname" class="t b" style="left:920.54px;top:200.81px;font-size:32px;color:#e6edf3;transform-origin:0 27.09px;transform:scale(0.8927,1);">style.css</div>
<svg class="abs" style="left:2730px;top:202px" width="32" height="32" viewBox="0 0 16 16" fill="#7d8590"><path d="M3.47 7.78a.75.75 0 0 1 0-1.06l4.25-4.25a.75.75 0 0 1 1.06 0l4.25 4.25a.751.751 0 0 1-.018 1.042.751.751 0 0 1-1.042.018L9 4.81v7.44a.75.75 0 0 1-1.5 0V4.81L4.53 7.78a.75.75 0 0 1-1.06 0Z"/></svg>
<div id="t_top" class="t b" style="left:2770.00px;top:206.48px;font-size:24px;color:#e6edf3;transform-origin:0 20.32px;transform:scale(0.9865,1);">Top</div>
<div class="abs" style="left:690px;top:280px;width:259px;height:56px;border-radius:12px;background:#21252d"></div>
<div class="abs" style="left:690px;top:278px;width:123px;height:60px;border-radius:12px;background:#0d1117;border:2px solid #6e7681"></div>
<div id="t_code" class="t b" style="left:715.38px;top:294.00px;font-size:28px;color:#e6edf3;transform-origin:0 23.70px;transform:scale(1.0161,1);">Code</div>
<div id="t_blame" class="t" style="left:841.96px;top:294.00px;font-size:28px;color:#e6edf3;transform-origin:0 23.70px;transform:scale(1.0188,1);">Blame</div>
<div id="t_meta" class="t mono" style="left:965.61px;top:297.90px;font-size:24px;color:#7d8590;transform-origin:0 18.40px;transform:scale(1.0020,1.06);">121 lines (115 loc) &#183; 2.1 KB</div>
<div class="btn" style="left:2568px;top:280px;width:192px;height:56px"></div>
<div class="abs" style="left:2650px;top:282px;width:2px;height:52px;background:#30363d"></div>
<div class="abs" style="left:2704px;top:282px;width:2px;height:52px;background:#30363d"></div>
<div id="t_raw" class="t b" style="left:2585.06px;top:296.28px;font-size:24px;color:#c9d1d9;transform-origin:0 20.32px;transform:scale(0.9553,1);">Raw</div>
<svg class="abs" style="left:2662px;top:292px" width="32" height="32" viewBox="0 0 16 16" fill="#c9d1d9"><path d="M0 6.75C0 5.784.784 5 1.75 5h1.5a.75.75 0 0 1 0 1.5h-1.5a.25.25 0 0 0-.25.25v7.5c0 .138.112.25.25.25h7.5a.25.25 0 0 0 .25-.25v-1.5a.75.75 0 0 1 1.5 0v1.5A1.75 1.75 0 0 1 9.25 16h-7.5A1.75 1.75 0 0 1 0 14.25Z"/><path d="M5 1.75C5 .784 5.784 0 6.75 0h7.5C15.216 0 16 .784 16 1.75v7.5A1.75 1.75 0 0 1 14.25 11h-7.5A1.75 1.75 0 0 1 5 9.25Zm1.75-.25a.25.25 0 0 0-.25.25v7.5c0 .138.112.25.25.25h7.5a.25.25 0 0 0 .25-.25v-7.5a.25.25 0 0 0-.25-.25Z"/></svg>
<svg class="abs" style="left:2716px;top:292px" width="32" height="32" viewBox="0 0 16 16" fill="#c9d1d9"><path d="M2.75 14A1.75 1.75 0 0 1 1 12.25v-2.5a.75.75 0 0 1 1.5 0v2.5c0 .138.112.25.25.25h10.5a.25.25 0 0 0 .25-.25v-2.5a.75.75 0 0 1 1.5 0v2.5A1.75 1.75 0 0 1 13.25 14Z"/><path d="M7.25 7.689V2a.75.75 0 0 1 1.5 0v5.689l1.97-1.969a.749.749 0 1 1 1.06 1.06l-3.25 3.25a.749.749 0 0 1-1.06 0L4.22 6.78a.749.749 0 1 1 1.06-1.06l1.97 1.969Z"/></svg>
<svg class="abs" style="left:2786px;top:292px" width="32" height="32" viewBox="0 0 16 16" fill="#7d8590"><path d="M0 1.75C0 .784.784 0 1.75 0h12.5C15.216 0 16 .784 16 1.75v12.5A1.75 1.75 0 0 1 14.25 16H1.75A1.75 1.75 0 0 1 0 14.25Zm1.75-.25a.25.25 0 0 0-.25.25v12.5c0 .138.112.25.25.25h12.5a.25.25 0 0 0 .25-.25V1.75a.25.25 0 0 0-.25-.25Zm7.47 3.97a.75.75 0 0 1 1.06 0l2 2a.75.75 0 0 1 0 1.06l-2 2a.749.749 0 0 1-1.275-.326.749.749 0 0 1 .215-.734L10.69 8 9.22 6.53a.75.75 0 0 1 0-1.06ZM6.78 6.53 5.31 8l1.47 1.47a.749.749 0 0 1-.326 1.275.749.749 0 0 1-.734-.215l-2-2a.75.75 0 0 1 0-1.06l2-2a.751.751 0 0 1 1.042.018.751.751 0 0 1 .018 1.042Z"/></svg>
<div class="ln" style="left:673.40px;top:359.57px;font-size:24.08px;transform-origin:0 26.43px;transform:scaleY(1.05)">30</div>
<div class="cl" style="left:860.0px;top:359.57px;font-size:24.08px;transform-origin:0 26.43px;transform:scaleY(1.05)">}</div>
<div class="ln" style="left:673.40px;top:399.57px;font-size:24.08px;transform-origin:0 26.43px;transform:scaleY(1.05)">31</div>
<div class="cl" style="left:860.0px;top:399.57px;font-size:24.08px;transform-origin:0 26.43px;transform:scaleY(1.05)"><span class="g">div</span> {</div>
<div class="ln" style="left:673.40px;top:439.57px;font-size:24.08px;transform-origin:0 26.43px;transform:scaleY(1.05)">32</div>
<div class="cl" style="left:860.0px;top:439.57px;font-size:24.08px;transform-origin:0 26.43px;transform:scaleY(1.05)">    <span class="p">background-color</span>: <span class="f">hsl</span>(<span class="p">248</span>, <span class="p">32</span><span class="u">%</span>, <span class="p">49</span><span class="u">%</span>);</div>
<div class="ln" style="left:673.40px;top:479.57px;font-size:24.08px;transform-origin:0 26.43px;transform:scaleY(1.05)">33</div>
<div class="cl" style="left:860.0px;top:479.57px;font-size:24.08px;transform-origin:0 26.43px;transform:scaleY(1.05)">    <span class="p">color</span>: white;</div>
<div class="ln" style="left:673.40px;top:519.57px;font-size:24.08px;transform-origin:0 26.43px;transform:scaleY(1.05)">34</div>
<div class="cl" style="left:860.0px;top:519.57px;font-size:24.08px;transform-origin:0 26.43px;transform:scaleY(1.05)">    <span class="p">padding</span>: <span class="p">10</span><span class="u">px</span> <span class="p">60</span><span class="u">px</span>;</div>
<div class="ln" style="left:673.40px;top:559.57px;font-size:24.08px;transform-origin:0 26.43px;transform:scaleY(1.05)">35</div>
<div class="cl" style="left:860.0px;top:559.57px;font-size:24.08px;transform-origin:0 26.43px;transform:scaleY(1.05)">    <span class="p">border-radius</span>: <span class="p">8</span><span class="u">px</span>;</div>
<div class="ln" style="left:673.40px;top:599.57px;font-size:24.08px;transform-origin:0 26.43px;transform:scaleY(1.05)">36</div>
<div class="cl" style="left:860.0px;top:599.57px;font-size:24.08px;transform-origin:0 26.43px;transform:scaleY(1.05)">    <span class="p">margin-bottom</span>: <span class="p">15</span><span class="u">px</span>;</div>
<div class="ln" style="left:673.40px;top:639.57px;font-size:24.08px;transform-origin:0 26.43px;transform:scaleY(1.05)">37</div>
<div class="cl" style="left:860.0px;top:639.57px;font-size:24.08px;transform-origin:0 26.43px;transform:scaleY(1.05)">    <span class="p">text-align</span>: center;</div>
<div class="ln" style="left:673.40px;top:679.57px;font-size:24.08px;transform-origin:0 26.43px;transform:scaleY(1.05)">38</div>
<div class="cl" style="left:860.0px;top:679.57px;font-size:24.08px;transform-origin:0 26.43px;transform:scaleY(1.05)">    <span class="p">box-shadow</span>: <span class="p">0</span><span class="u">px</span> <span class="p">0</span><span class="u">px</span> <span class="p">8</span><span class="u">px</span> <span class="p">0</span><span class="u">px</span> <span class="f">hsl</span>(<span class="p">249</span>, <span class="p">10</span><span class="u">%</span>, <span class="p">26</span><span class="u">%</span>);</div>
<div class="ln" style="left:673.40px;top:719.57px;font-size:24.08px;transform-origin:0 26.43px;transform:scaleY(1.05)">39</div>
<div class="cl" style="left:860.0px;top:719.57px;font-size:24.08px;transform-origin:0 26.43px;transform:scaleY(1.05)">}</div>
<div class="ln" style="left:673.40px;top:759.57px;font-size:24.08px;transform-origin:0 26.43px;transform:scaleY(1.05)">40</div>
<div class="cl" style="left:860.0px;top:759.57px;font-size:24.08px;transform-origin:0 26.43px;transform:scaleY(1.05)">.<span class="p">register-box</span> {</div>
<div class="ln" style="left:673.40px;top:799.57px;font-size:24.08px;transform-origin:0 26.43px;transform:scaleY(1.05)">41</div>
<div class="cl" style="left:860.0px;top:799.57px;font-size:24.08px;transform-origin:0 26.43px;transform:scaleY(1.05)">    <span class="p">width</span>: <span class="p">450</span><span class="u">px</span>;</div>
<div class="ln" style="left:673.40px;top:839.57px;font-size:24.08px;transform-origin:0 26.43px;transform:scaleY(1.05)">42</div>
<div class="cl" style="left:860.0px;top:839.57px;font-size:24.08px;transform-origin:0 26.43px;transform:scaleY(1.05)">    <span class="p">margin</span>: auto;</div>
<div class="ln" style="left:673.40px;top:879.57px;font-size:24.08px;transform-origin:0 26.43px;transform:scaleY(1.05)">43</div>
<div class="cl" style="left:860.0px;top:879.57px;font-size:24.08px;transform-origin:0 26.43px;transform:scaleY(1.05)">    <span class="p">background-color</span>: white;</div>
<div class="ln" style="left:673.40px;top:919.57px;font-size:24.08px;transform-origin:0 26.43px;transform:scaleY(1.05)">44</div>
<div class="cl" style="left:860.0px;top:919.57px;font-size:24.08px;transform-origin:0 26.43px;transform:scaleY(1.05)">    <span class="p">border-radius</span>: <span class="p">8</span><span class="u">px</span>;</div>
<div class="ln" style="left:673.40px;top:959.57px;font-size:24.08px;transform-origin:0 26.43px;transform:scaleY(1.05)">45</div>
<div class="cl" style="left:860.0px;top:959.57px;font-size:24.08px;transform-origin:0 26.43px;transform:scaleY(1.05)">    <span class="p">box-shadow</span>: <span class="p">0</span><span class="u">px</span> <span class="p">0</span><span class="u">px</span> <span class="p">10</span><span class="u">px</span> <span class="p">0</span><span class="u">px</span> <span class="f">hsl</span>(<span class="p">249</span>, <span class="p">10</span><span class="u">%</span>, <span class="p">26</span><span class="u">%</span>);</div>
<div class="ln" style="left:673.40px;top:999.57px;font-size:24.08px;transform-origin:0 26.43px;transform:scaleY(1.05)">46</div>
<div class="cl" style="left:860.0px;top:999.57px;font-size:24.08px;transform-origin:0 26.43px;transform:scaleY(1.05)">    <span class="p">padding</span>: <span class="p">15</span><span class="u">px</span>;</div>
<div class="ln" style="left:673.40px;top:1039.57px;font-size:24.08px;transform-origin:0 26.43px;transform:scaleY(1.05)">47</div>
<div class="cl" style="left:860.0px;top:1039.57px;font-size:24.08px;transform-origin:0 26.43px;transform:scaleY(1.05)">}</div>
<div class="ln" style="left:673.40px;top:1079.57px;font-size:24.08px;transform-origin:0 26.43px;transform:scaleY(1.05)">48</div>
<div class="ln" style="left:673.40px;top:1119.57px;font-size:24.08px;transform-origin:0 26.43px;transform:scaleY(1.05)">49</div>
<div class="cl" style="left:860.0px;top:1119.57px;font-size:24.08px;transform-origin:0 26.43px;transform:scaleY(1.05)"><span class="g">input</span> {</div>
<div class="ln" style="left:673.40px;top:1159.57px;font-size:24.08px;transform-origin:0 26.43px;transform:scaleY(1.05)">50</div>
<div class="cl" style="left:860.0px;top:1159.57px;font-size:24.08px;transform-origin:0 26.43px;transform:scaleY(1.05)">    <span class="p">display</span>: block;</div>
<div class="ln" style="left:673.40px;top:1199.57px;font-size:24.08px;transform-origin:0 26.43px;transform:scaleY(1.05)">51</div>
<div class="cl" style="left:860.0px;top:1199.57px;font-size:24.08px;transform-origin:0 26.43px;transform:scaleY(1.05)">    <span class="p">margin</span>: <span class="p">1</span><span class="u">rem</span> <span class="p">0</span>;</div>
<div class="ln" style="left:673.40px;top:1239.57px;font-size:24.08px;transform-origin:0 26.43px;transform:scaleY(1.05)">52</div>
<div class="cl" style="left:860.0px;top:1239.57px;font-size:24.08px;transform-origin:0 26.43px;transform:scaleY(1.05)">    <span class="p">width</span>: <span class="p">100</span><span class="u">%</span>;</div>
<div class="ln" style="left:673.40px;top:1279.57px;font-size:24.08px;transform-origin:0 26.43px;transform:scaleY(1.05)">53</div>
<div class="cl" style="left:860.0px;top:1279.57px;font-size:24.08px;transform-origin:0 26.43px;transform:scaleY(1.05)">     <span class="p">padding</span>: <span class="p">10</span><span class="u">px</span>;</div>
<div class="ln" style="left:673.40px;top:1319.57px;font-size:24.08px;transform-origin:0 26.43px;transform:scaleY(1.05)">54</div>
<div class="cl" style="left:860.0px;top:1319.57px;font-size:24.08px;transform-origin:0 26.43px;transform:scaleY(1.05)">     <span class="p">border</span>: none;</div>
<div class="ln" style="left:673.40px;top:1359.57px;font-size:24.08px;transform-origin:0 26.43px;transform:scaleY(1.05)">55</div>
<div class="cl" style="left:860.0px;top:1359.57px;font-size:24.08px;transform-origin:0 26.43px;transform:scaleY(1.05)">     <span class="p">border</span>: <span class="p">1</span><span class="u">px</span> solid <span class="f">hsl</span>(<span class="p">246</span>, <span class="p">25</span><span class="u">%</span>, <span class="p">77</span><span class="u">%</span>);</div>
<div class="ln" style="left:673.40px;top:1399.57px;font-size:24.08px;transform-origin:0 26.43px;transform:scaleY(1.05)">56</div>
<div class="cl" style="left:860.0px;top:1399.57px;font-size:24.08px;transform-origin:0 26.43px;transform:scaleY(1.05)">     <span class="p">border-radius</span>: <span class="p">5</span><span class="u">px</span>;</div>
<div class="ln" style="left:673.40px;top:1439.57px;font-size:24.08px;transform-origin:0 26.43px;transform:scaleY(1.05)">57</div>
<div class="cl" style="left:860.0px;top:1439.57px;font-size:24.08px;transform-origin:0 26.43px;transform:scaleY(1.05)">     <span class="p">outline</span>: none;</div>
<div class="ln" style="left:673.40px;top:1479.57px;font-size:24.08px;transform-origin:0 26.43px;transform:scaleY(1.05)">58</div>
<div class="cl" style="left:860.0px;top:1479.57px;font-size:24.08px;transform-origin:0 26.43px;transform:scaleY(1.05)">}</div>
<div class="ln" style="left:673.40px;top:1519.57px;font-size:24.08px;transform-origin:0 26.43px;transform:scaleY(1.05)">59</div>
<div class="cl" style="left:860.0px;top:1519.57px;font-size:24.08px;transform-origin:0 26.43px;transform:scaleY(1.05)">::<span class="g">placeholder</span> {</div>
<div class="ln" style="left:673.40px;top:1559.57px;font-size:24.08px;transform-origin:0 26.43px;transform:scaleY(1.05)">60</div>
<div class="cl" style="left:860.0px;top:1559.57px;font-size:24.08px;transform-origin:0 26.43px;transform:scaleY(1.05)">    <span class="p">font-family</span>: <span class="s">&#39;Poppins&#39;</span>, sans-serif;</div>
<div class="ln" style="left:673.40px;top:1599.57px;font-size:24.08px;transform-origin:0 26.43px;transform:scaleY(1.05)">61</div>
<div class="cl" style="left:860.0px;top:1599.57px;font-size:24.08px;transform-origin:0 26.43px;transform:scaleY(1.05)">    <span class="p">font-weight</span>: <span class="p">300</span>;</div>
<div class="ln" style="left:673.40px;top:1639.57px;font-size:24.08px;transform-origin:0 26.43px;transform:scaleY(1.05)">62</div>
<div class="cl" style="left:860.0px;top:1639.57px;font-size:24.08px;transform-origin:0 26.43px;transform:scaleY(1.05)">}</div>
<div class="ln" style="left:673.40px;top:1679.57px;font-size:24.08px;transform-origin:0 26.43px;transform:scaleY(1.05)">63</div>
<div class="cl" style="left:860.0px;top:1679.57px;font-size:24.08px;transform-origin:0 26.43px;transform:scaleY(1.05)"><span class="g">button</span> {</div>
<div class="ln" style="left:673.40px;top:1719.57px;font-size:24.08px;transform-origin:0 26.43px;transform:scaleY(1.05)">64</div>
<div class="cl" style="left:860.0px;top:1719.57px;font-size:24.08px;transform-origin:0 26.43px;transform:scaleY(1.05)">    <span class="p">background-color</span>: <span class="f">hsl</span>(<span class="p">154</span>, <span class="p">59</span><span class="u">%</span>, <span class="p">51</span><span class="u">%</span>);</div>
<div class="ln" style="left:673.40px;top:1759.57px;font-size:24.08px;transform-origin:0 26.43px;transform:scaleY(1.05)">65</div>
<div class="cl" style="left:860.0px;top:1759.57px;font-size:24.08px;transform-origin:0 26.43px;transform:scaleY(1.05)">    <span class="p">color</span>: white;</div>
<div class="ln" style="left:673.40px;top:1799.57px;font-size:24.08px;transform-origin:0 26.43px;transform:scaleY(1.05)">66</div>
<div class="cl" style="left:860.0px;top:1799.57px;font-size:24.08px;transform-origin:0 26.43px;transform:scaleY(1.05)">    <span class="p">border</span>: none;</div>
</body></html>
